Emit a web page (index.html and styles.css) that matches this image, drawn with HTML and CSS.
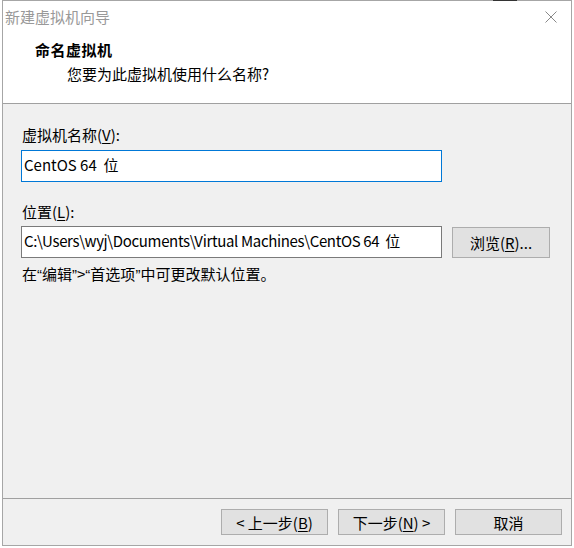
FILE: index.html
```html
<!DOCTYPE html>
<html lang="zh-CN">
<head>
<meta charset="utf-8">
<title>新建虚拟机向导</title>
<link rel="stylesheet" href="styles.css">
</head>
<body>
<div class="shadow-mark"></div>
<div class="window">
  <div class="top">
    <div class="titlebar">
      <span class="title">新建虚拟机向导</span>
      <svg class="close" width="12" height="12" viewBox="0 0 12 12"><path d="M0.5 0.5 L11.5 11.5 M11.5 0.5 L0.5 11.5" stroke="#888" stroke-width="1" fill="none"/></svg>
    </div>
    <div class="header">
      <div class="heading">命名虚拟机</div>
      <div class="subheading">您要为此虚拟机使用什么名称?</div>
    </div>
  </div>
  <div class="body">
    <div class="label">虚拟机名称(<u>V</u>):</div>
    <div class="input focused">CentOS 64&nbsp; 位</div>
    <div class="label second">位置(<u>L</u>):</div>
    <div class="row">
      <div class="input path">C:\Users\wyj\Documents\Virtual Machines\CentOS 64&nbsp; 位</div>
      <div class="btn browse">浏览(<u>R</u>)...</div>
    </div>
    <div class="hint">在<span class="q">“</span>编辑<span class="q">”</span>&gt;<span class="q">“</span>首选项<span class="q">”</span>中可更改默认位置。</div>
  </div>
  <div class="footer">
    <div class="btn nav">&lt; 上一步(<u>B</u>)</div>
    <div class="btn nav">下一步(<u>N</u>) &gt;</div>
    <div class="btn nav">取消</div>
  </div>
</div>
</body>
</html>
```
FILE: styles.css
```css
html, body {
  margin: 0;
  padding: 0;
  background: #ffffff;
}
body {
  width: 574px;
  height: 548px;
  position: relative;
  font-family: "Noto Sans CJK SC", "Noto Sans", sans-serif;
  font-size: 15px;
  color: #000;
}
.shadow-mark {
  position: absolute;
  left: 493px;
  top: 0;
  width: 24px;
  height: 1px;
  background: #333;
}
.window {
  box-sizing: border-box;
  margin-left: 2px;
  width: 570px;
  height: 546px;
  border: 1px solid #a6a6a6;
  display: flex;
  flex-direction: column;
  background: #f0f0f0;
}
.top {
  background: #fff;
  height: 102px;
  border-bottom: 1px solid #a0a0a0;
  display: flex;
  flex-direction: column;
}
.titlebar {
  height: 31px;
  display: flex;
  align-items: center;
  justify-content: space-between;
  padding: 0 14px 0 2px;
}
.title {
  color: #999;
  line-height: 20px;
}
.close {
  display: block;
}
.header {
  display: flex;
  flex-direction: column;
  padding-left: 32px;
}
.heading {
  font-weight: bold;
  line-height: 20px;
  margin-top: 8px;
  letter-spacing: 0.5px;
}
.subheading {
  padding-left: 32px;
  line-height: 20px;
  margin-top: 4px;
}
.body {
  flex: 1;
  padding: 21px 0 0 18px;
  display: flex;
  flex-direction: column;
  border-bottom: 1px solid #a0a0a0;
}
.label {
  line-height: 20px;
  padding-left: 1px;
}
.label.second {
  margin-top: 20px;
}
.input {
  box-sizing: border-box;
  width: 421px;
  height: 32px;
  background: #fff;
  border: 1px solid #7a7a7a;
  padding-left: 2px;
  line-height: 28px;
  white-space: nowrap;
  overflow: hidden;
}
.input.focused {
  border-color: #0078d7;
  margin-top: 5px;
}
.path {
  letter-spacing: -0.35px;
}
.row {
  display: flex;
  align-items: flex-start;
  gap: 10px;
  margin-top: 4px;
}
.btn {
  box-sizing: border-box;
  background: #e1e1e1;
  border: 1px solid #adadad;
  display: flex;
  align-items: center;
  justify-content: center;
  white-space: nowrap;
}
.browse {
  width: 98px;
  height: 31px;
  margin-top: 1px;
}
.hint {
  margin-top: 6px;
  line-height: 20px;
  padding-left: 1px;
}
.q {
  font-family: "Liberation Sans", sans-serif;
}
.footer {
  height: 46px;
  display: flex;
  justify-content: flex-end;
  align-items: flex-start;
  gap: 10px;
  padding: 10px 9px 0 0;
  box-sizing: border-box;
}
.nav {
  width: 107px;
  height: 26px;
}
u {
  text-decoration-thickness: 1px;
  text-underline-offset: 2px;
}
```
